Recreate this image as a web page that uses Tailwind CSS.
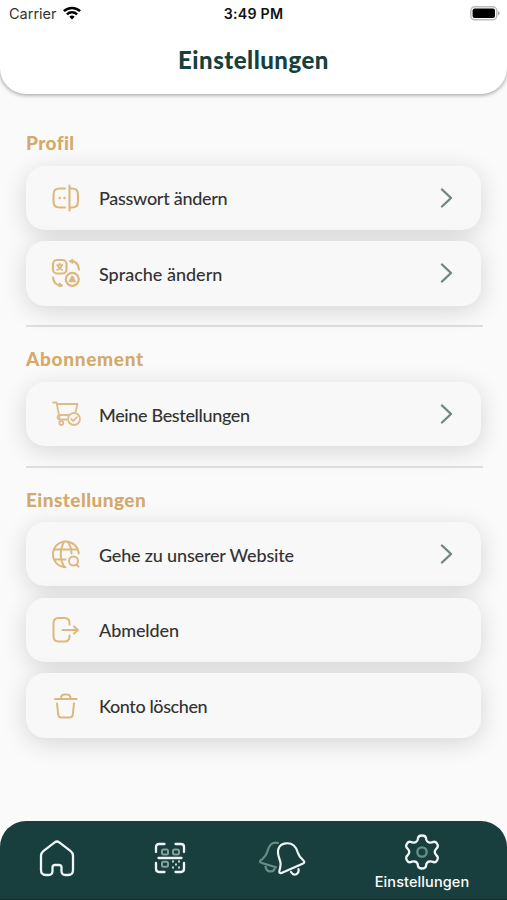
<!DOCTYPE html>
<html lang="de">
<head>
<meta charset="utf-8">
<title>Einstellungen</title>
<script src="https://cdn.jsdelivr.net/npm/@tailwindcss/browser@4"></script>
</head>
<body class="bg-[#fafafa]">
<div class="w-[507px] h-[900px] overflow-hidden flex flex-col bg-[#fafafa] font-['Lato',sans-serif]">
  <header class="relative z-10 h-[94px] shrink-0 bg-white rounded-b-[26px] shadow-[0_1px_4px_rgba(0,0,0,0.4)]">
    <div class="h-7 grid grid-cols-3 items-center pl-[7px] pr-[7px] font-['Inter',sans-serif] text-[#111]">
      <div class="flex items-center gap-[6px] pl-[2px] text-[14.5px] text-[#333]"><span>Carrier</span>
        <svg class="w-[18px] h-[14px] -mt-[2px]" viewBox="0 0 18 14" fill="none" stroke="#000" stroke-width="2.5"><path d="M.9 5.2a11.6 11.6 0 0 1 16.2 0M3.9 8.3a7.3 7.3 0 0 1 10.2 0"/><path d="M9 13.6l-2.7-2.8a3.9 3.9 0 0 1 5.4 0z" fill="#000" stroke="none"/></svg>
      </div>
      <div class="text-center text-[14.2px] tracking-[0.25px] font-semibold whitespace-nowrap">3:49 PM</div>
      <svg class="justify-self-end w-[31px] h-[15px] -mt-[2px]" viewBox="0 0 31 15"><rect x="1.8" y=".8" width="26" height="13" rx="4" fill="#fff" stroke="#bbb" stroke-width="1.5"/><rect x="3.600" y="2.600" width="22.400" height="9.400" rx="2" fill="#000"/><path d="M29 5v4.500q1.700-.8 1.700-2.200T29 5z" fill="#aaa"/></svg>
    </div>
    <h1 class="h-[65px] text-center leading-[64px] text-[24px] tracking-[0.5px] font-black text-[#163f3d]">Einstellungen</h1>
  </header>

  <main class="flex-1 px-[26px] pt-[37px] text-[18px] font-medium text-[#333]">
    <section>
      <h2 class="h-6 leading-[23px] text-[19px] tracking-[0.4px] font-black text-[#d3aa69]">Profil</h2>
      <div class="mt-[10.5px] flex flex-col gap-[11.2px]">
        <div class="h-[64.5px] rounded-[19px] bg-[#f8f8f8] shadow-[0_5px_25px_rgba(0,0,0,0.15)] flex items-center pl-[24px] pr-[27px]">
          <svg class="w-8 h-8 mr-[17px]" viewBox="0 0 32 32" fill="none" stroke="#dcb87f" stroke-width="2.100" stroke-linecap="round"><path d="M15 6.500H9.500Q3.500 6.500 3.500 12.500v7Q3.500 25.500 9.500 25.500H15M19.500 3.500v25M19.500 6.500h2.500q6 0 6 6v7q0 6-6 6h-2.500"/><path d="M9.700 16h.1M14.500 16h.1" stroke-width="2.400"/></svg>
          <span class="flex-1 pt-[2px] tracking-[-0.28px]">Passwort ändern</span>
          <svg class="w-4 h-5" viewBox="0 0 16 20" fill="none" stroke="#71867f" stroke-width="2.400" stroke-linecap="round" stroke-linejoin="round"><path d="M4 1.500l9 8.500-9 8.500"/></svg>
        </div>
        <div class="relative h-[64.5px] rounded-[19px] bg-[#f8f8f8] shadow-[0_5px_25px_rgba(0,0,0,0.15)] flex items-center pl-[24px] pr-[27px]">
          <svg class="w-8 h-8 mr-[17px]" viewBox="0 0 32 32" fill="none" stroke="#dcb87f" stroke-width="2.200" stroke-linecap="round" stroke-linejoin="round"><rect x="3" y="3" width="13.500" height="13.500" rx="4"/><path d="M7 8h5.500M9.700 6.500V8M12 8q-1.500 4-5 5M7.800 9q1.500 3 4.500 4" stroke-width="1.700"/><circle cx="22.300" cy="22.300" r="6.500"/><path d="M19.700 24.300l2.600-4.700 2.600 4.700z" stroke-width="2" fill="#dcb87f"/><path d="M20.500 4q7.500 0 8.500 8.500M3 20.500q.5 7.500 8.500 8"/><path d="M19.500 4l3.300-1.800-.2 4zM12.500 28.500l-3-2.500-.5 3.500z" stroke-width="1" fill="#dcb87f"/></svg>
          <span class="flex-1 pt-[2px]">Sprache ändern</span>
          <svg class="w-4 h-5" viewBox="0 0 16 20" fill="none" stroke="#71867f" stroke-width="2.400" stroke-linecap="round" stroke-linejoin="round"><path d="M4 1.500l9 8.500-9 8.500"/></svg>
        </div>
      </div>
      <hr class="-mr-[2px] mt-[19.300px] border-0 h-[2px] bg-[#dedede]">
    </section>
    <section class="pt-[20.500px]">
      <h2 class="h-6 leading-[23px] text-[19px] tracking-[0.7px] font-black text-[#d3aa69]">Abonnement</h2>
      <div class="mt-[10.300px] h-[64.5px] rounded-[19px] bg-[#f8f8f8] shadow-[0_5px_25px_rgba(0,0,0,0.15)] flex items-center pl-[24px] pr-[27px]">
        <svg class="w-8 h-8 mr-[17px]" viewBox="0 0 32 32" fill="none" stroke="#dfbd8a" stroke-width="1.800" stroke-linecap="round" stroke-linejoin="round"><path d="M3 4.500h3.500L9.500 19.500M7 6h20.500l-2 8M10 17h9M17 21.500H9.500a2 2 0 0 1 0-4"/><circle cx="11.300" cy="25" r="2"/><circle cx="24" cy="21" r="6"/><path d="M21.200 21l2 2 3.800-3.800"/></svg>
        <span class="flex-1 pt-[2px] tracking-[-0.35px]">Meine Bestellungen</span>
        <svg class="w-4 h-5" viewBox="0 0 16 20" fill="none" stroke="#71867f" stroke-width="2.400" stroke-linecap="round" stroke-linejoin="round"><path d="M4 1.500l9 8.500-9 8.500"/></svg>
      </div>
      <hr class="-mr-[2px] mt-[19.500px] border-0 h-[2px] bg-[#dedede]">
    </section>
    <section class="pt-5">
      <h2 class="h-6 leading-[23px] text-[19px] tracking-[0.45px] font-black text-[#d3aa69]">Einstellungen</h2>
      <div class="mt-[10.200px] flex flex-col gap-[11.2px]">
        <div class="h-[64.5px] rounded-[19px] bg-[#f8f8f8] shadow-[0_5px_25px_rgba(0,0,0,0.15)] flex items-center pl-[24px] pr-[27px]">
          <svg class="w-8 h-8 mr-[17px]" viewBox="0 0 32 32" fill="none" stroke="#dcb87f" stroke-width="2" stroke-linecap="round"><path d="M15.500 29.200A12.900 12.900 0 1 1 28.700 15.500M4.500 11.500h23M4.500 21.500h11M14.500 29C9.500 22 9.500 10 14.500 3.500M17.500 3.500q4 5 4 12"/><circle cx="23.500" cy="23" r="4.500"/><path d="M26.700 26.300l1.800 2.400"/></svg>
          <span class="flex-1 pt-[2px] tracking-[-0.17px]">Gehe zu unserer Website</span>
          <svg class="w-4 h-5" viewBox="0 0 16 20" fill="none" stroke="#71867f" stroke-width="2.400" stroke-linecap="round" stroke-linejoin="round"><path d="M4 1.500l9 8.500-9 8.500"/></svg>
        </div>
        <div class="relative h-[64.5px] rounded-[19px] bg-[#f8f8f8] shadow-[0_5px_25px_rgba(0,0,0,0.15)] flex items-center pl-[24px] pr-[27px]">
          <svg class="w-8 h-8 mr-[17px]" viewBox="0 0 32 32" fill="none" stroke="#dcb87f" stroke-width="2" stroke-linecap="round" stroke-linejoin="round"><path d="M19.500 10.500V9q0-5-5-5H8.500Q3.500 4 3.500 9v13q0 5.500 5 5.500h6q5 0 5-5V21.500M12.500 16H28M24 12.500l4 3.500-4 3.500"/></svg>
          <span class="flex-1 pt-[2px] tracking-[-0.1px]">Abmelden</span>
        </div>
        <div class="relative h-[64.5px] rounded-[19px] bg-[#f8f8f8] shadow-[0_5px_25px_rgba(0,0,0,0.15)] flex items-center pl-[24px] pr-[27px]">
          <svg class="w-8 h-8 mr-[17px]" viewBox="0 0 32 32" fill="none" stroke="#dcb87f" stroke-width="2" stroke-linecap="round" stroke-linejoin="round"><path d="M5 9h21.500M11 8.500q0-4 3.500-4h2.500q3.500 0 3.500 4M7 13.500l1.200 11q.3 3 3 3h8.600q2.700 0 3-3l1.200-11"/></svg>
          <span class="flex-1 pt-[2px] tracking-[-0.4px]">Konto löschen</span>
        </div>
      </div>
    </section>
  </main>

  <nav class="relative z-10 h-[79.500px] shrink-0 bg-[#183e3d] rounded-t-[26px] grid grid-cols-[113px_113px_112px_169px] border-b border-[#102e2e]">
    <div class="flex justify-center pt-[19.500px]">
      <svg class="w-9 h-[37px]" viewBox="0 0 36 37" fill="none" stroke="#eef5f6" stroke-width="2.300" stroke-linejoin="round"><path d="M15.700 2.400q2.300-1.800 4.600 0l11.400 8.700q2.300 1.800 2.300 4.700V30q0 5-5 5h-2.500q-4 0-4-4v-3.500q0-2.500-2.500-2.500h-4q-2.500 0-2.500 2.500V31q0 4-4 4H7q-5 0-5-5V15.800q0-2.900 2.300-4.700z"/></svg>
    </div>
    <div class="flex justify-center pt-[21.500px]">
      <svg class="w-8 h-8" viewBox="0 0 32 32" fill="none" stroke="#eef5f6" stroke-width="2.300" stroke-linecap="round"><path d="M2 10V5q0-3 3-3h5.500M21.500 2H27q3 0 3 3v5M2 21v5.500q0 3.500 3 3.500h5.500M21.500 30H27q3 0 3-3.500V21M4.500 16h23"/><g stroke="#83a09c" stroke-width="2"><rect x="8" y="7.500" width="6" height="5" rx="1.500"/><rect x="19" y="7.500" width="6" height="5" rx="1.500"/><rect x="8" y="19.800" width="6" height="5" rx="1.500"/></g><path d="M18 18.500h2v2h-2zM24 18.500h2v2h-2zM21 21.500h2v2h-2zM18 24.500h2v2h-2zM24 24.500h2v2h-2z" fill="#c5d3d1" stroke="none"/></svg>
    </div>
    <div class="flex justify-center pt-[19.500px]">
      <svg class="w-12 h-9" viewBox="0 0 48 36" fill="none" stroke-width="2.200" stroke-linecap="round" stroke-linejoin="round"><path d="M20 3C13 1 10.500 7 9.200 12Q8.200 16 4 19.500q-4 2 0 3.500l14 4.300M7.500 26.500q1 5.500 5.500 4.800 3 0 3.500-2.500" stroke="#678e88"/><path d="M23.500 33c-2 .5-2.500-.7-2-2.500 1.500-6 1.500-7.500-.2-12C18.500 11 20 4 28 3.300c7-.6 10.400 4.500 11.700 9 1.300 4 2.300 5 5.300 7.700q3 2.500-1 4zM33 32q2 3.500 5.200 2.200 3-1.500 2.300-5" stroke="#eef5f6"/></svg>
    </div>
    <div class="flex flex-col items-center pt-[13px] pr-[1px]">
      <svg class="w-[34px] h-[36px]" viewBox="0 0 34 36" fill="none" stroke="#eef5f6" stroke-width="2.300" stroke-linejoin="round"><path d="M13 4Q13.500 1.500 17 1.500T21 4q.3 4 3.500 4.500 2 .2 4-.6 2.400-.7 3.800 2.200 1.400 2.700-.8 4.400-3.500 3.500 0 7 2.200 1.700.8 4.400-1.400 2.900-3.800 2.200-2-.8-4-.6-3.200.5-3.500 4.500-.5 2.500-4 2.500t-4-2.500q-.3-4-3.500-4.500-2-.2-4 .6-2.400.7-3.800-2.200Q.3 23.200 2.500 21.500q3.500-3.500 0-7Q.3 12.800 1.700 10.100 3.100 7.200 5.500 7.900q2 .8 4 .6Q12.700 8 13 4z"/><circle cx="17" cy="18" r="4.700" stroke="#67908a"/></svg>
      <span class="text-[14.5px] leading-6 tracking-[0.1px] font-medium text-white font-['Inter',sans-serif]">Einstellungen</span>
    </div>
  </nav>
</div>
</body>
</html>
